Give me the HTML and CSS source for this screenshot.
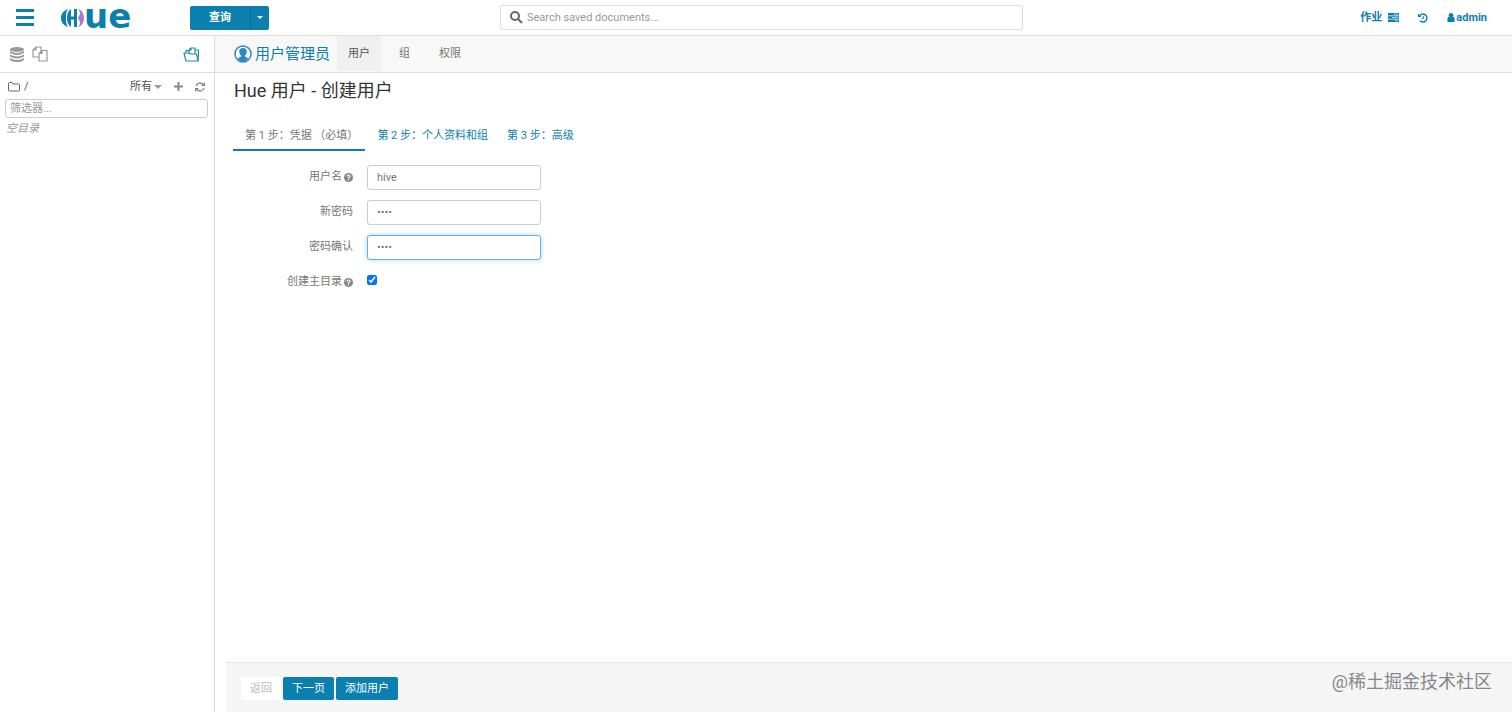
FILE: index.html
```html
<!DOCTYPE html>
<html lang="zh-CN">
<head>
	<meta charset="UTF-8">
	<title>Hue - 用户管理员</title>
	<link rel="stylesheet" href="styles.css">
</head>
<body>
	<!-- 顶部导航 -->
	<header class="top-nav">
		<div class="top-left">
			<button class="hamburger" type="button" aria-label="菜单"><span></span><span></span><span></span></button>
			<a class="logo" href="#">
				<svg width="23" height="20" viewBox="0 0 23 20">
					<path d="M7 1C2 3 0 6 0 10s2 7 7 9C5 16 5 14 5 10s0-6 2-9z" fill="#0b7fad"/>
					<path d="M10 1C7 3 6 6 6 10s1 7 4 9v-7.500h3V19h3V1h-3v7.500h-3z" fill="#0b7fad"/>
					<path d="M17 1c4 1 6 5 6 9s-2 8-6 9c2-2 2-4 2-5l-2-4 2-4c0-1 0-3-2-5z" fill="#a77bca"/>
				</svg>
				<span>ue</span>
			</a>
			<div class="btn-group">
				<button class="btn-primary query" type="button">查询</button>
				<button class="btn-primary toggle" type="button" aria-label="更多"><i class="caret"></i></button>
			</div>
		</div>
		<label class="search">
			<svg width="13" height="13" viewBox="0 0 13 13" fill="none" stroke="#666" stroke-width="2"><circle cx="5" cy="5" r="4"/><path d="M8 8l4 4"/></svg>
			<input type="text" placeholder="Search saved documents..." aria-label="Search saved documents">
		</label>
		<nav class="top-right">
			<a class="jobs" href="#">作业
				<svg width="11" height="9" viewBox="0 0 11 9"><path d="M0 0h11v2.500H0zM0 3.300h11v2.500H0zM0 6.500h11V9H0z" fill="#0b7fad"/><path d="M6 1.200h4M4 4.500h6M7 7.700h3" stroke="#a9d2e3"/></svg>
			</a>
			<a href="#" aria-label="历史">
				<svg width="10" height="10" viewBox="0 0 10 10" fill="none" stroke="#0b7fad"><path d="M1.500 3A4 4 0 1 1 2 7.800" stroke-width="1.400"/><path d="M0 .5V4h3.500z" fill="#0b7fad" stroke="none"/><path d="M5.300 3v2.500H3.500"/></svg>
			</a>
			<a class="user" href="#">
				<svg width="8" height="9" viewBox="0 0 8 10" fill="#0b7fad"><circle cx="4" cy="2.500" r="2.500"/><path d="M0 9V7c0-2 1-3 2-3q2 1.500 4 0c1 0 2 1 2 3v2q0 1-1 1H1Q0 10 0 9z"/></svg>
				admin
			</a>
		</nav>
	</header>

	<div class="page">
		<!-- 左侧面板 -->
		<aside class="sidebar">
			<div class="assist-bar">
				<a href="#" aria-label="数据库">
					<svg width="14" height="15" viewBox="0 0 14 15" fill="#999"><ellipse cx="7" cy="2.500" rx="7" ry="2.500"/><path d="M0 4q7 4 14 0v2q-7 4-14 0zM0 7.500q7 4 14 0v2q-7 4-14 0zM0 11q7 4 14 0v1.500q-1 2.500-7 2.500t-7-2.500z"/></svg>
				</a>
				<a href="#" aria-label="文档">
					<svg width="16" height="16" viewBox="0 0 16 16" fill="#fff" stroke="#999" stroke-width="1.200"><path d="M4 1h5v10H1V4zM4 1v3H1"/><path d="M10 4.500h5V15H7V7.500zM10 4.500v3H7"/></svg>
				</a>
				<a class="folder-open" href="#" aria-label="文件">
					<svg width="17" height="15" viewBox="0 0 17 15" fill="#fff" stroke="#1b8cb8" stroke-width="1.200" stroke-linejoin="round"><path d="M3 6V3.500h3M12 3h3.500v3l-.5 8"/><path d="M6 7V3l2-2h4v6M8 1v2H6"/><path d="M1 6h5l1 1h6.500L15 14H3z"/></svg>
				</a>
			</div>
			<div class="path-bar">
				<a class="path" href="#">
					<svg width="12" height="10" viewBox="0 0 12 10" fill="none" stroke="#666"><path d="M.5 8V1.500q0-1 1-1h2.500l1 1.500h5.500q1 0 1 1V8q0 1-1 1h-9q-1 0-1-1z"/></svg>
					/
				</a>
				<button class="plain" type="button">所有<i class="caret"></i></button>
				<button class="plain" type="button" aria-label="新建">
					<svg width="9" height="9" viewBox="0 0 9 9"><path d="M4.500 0v9M0 4.500h9" stroke="#888" stroke-width="2"/></svg>
				</button>
				<button class="plain" type="button" aria-label="刷新">
					<svg width="10" height="10" viewBox="0 0 10 10" fill="none" stroke="#888" stroke-width="1.300"><path d="M1 4.200A4 4 0 0 1 8 2.500M9 5.800A4 4 0 0 1 2 7.500"/><path d="M10 0v4H6zM0 10V6h4z" fill="#888" stroke="none"/></svg>
				</button>
			</div>
			<input class="filter" type="text" placeholder="筛选器..." aria-label="筛选器">
			<p class="empty">空目录</p>
		</aside>

		<main class="content">
			<nav class="app-nav">
				<a class="app-title" href="#">
					<svg width="18" height="18" viewBox="0 0 18 18"><circle cx="9" cy="9" r="8" fill="#fff" stroke="#2f86c1" stroke-width="1.500"/><path d="M9 3c-2.500 0-3.800 1.500-3.800 3.500S6.500 10 7 10.500v1L3.500 13.500Q6 16.500 9 16.500t5.500-3L11 11.500v-1c.5-.5 1.800-2 1.800-4S11.500 3 9 3z" fill="#2f86c1"/></svg>
					用户管理员
				</a>
				<a class="active" href="#">用户</a>
				<a href="#">组</a>
				<a href="#">权限</a>
			</nav>

			<h1>Hue 用户 - 创建用户</h1>

			<nav class="steps">
				<a class="active" href="#">第 1 步：凭据 （必填）</a>
				<a href="#">第 2 步：个人资料和组</a>
				<a href="#">第 3 步：高级</a>
			</nav>

			<!-- 表单 -->
			<form class="user-form" id="userForm">
				<div class="row">
					<label for="username">用户名
						<svg width="9" height="9" viewBox="0 0 9 9"><circle cx="4.500" cy="4.500" r="4.500" fill="#888"/><path d="M3 3.500q0-1.500 1.500-1.500T6 3.300q0 .8-1.500 1.500v.7M4.500 6.300v1.200" fill="none" stroke="#fff" stroke-width="1.200"/></svg>
					</label>
					<input id="username" type="text" value="hive">
				</div>
				<div class="row">
					<label for="password1">新密码</label>
					<input id="password1" type="password" value="hive">
				</div>
				<div class="row">
					<label for="password2">密码确认</label>
					<input id="password2" class="focused" type="password" value="hive">
				</div>
				<div class="row">
					<label for="home">创建主目录
						<svg width="9" height="9" viewBox="0 0 9 9"><circle cx="4.500" cy="4.500" r="4.500" fill="#888"/><path d="M3 3.500q0-1.500 1.500-1.500T6 3.300q0 .8-1.500 1.500v.7M4.500 6.300v1.200" fill="none" stroke="#fff" stroke-width="1.200"/></svg>
					</label>
					<input id="home" type="checkbox" checked>
				</div>
			</form>

			<footer class="actions">
				<button class="btn-back" type="button" disabled>返回</button>
				<button class="btn-primary" type="button">下一页</button>
				<button class="btn-primary" type="submit" form="userForm">添加用户</button>
				<span class="watermark">@稀土掘金技术社区</span>
			</footer>
		</main>
	</div>
</body>
</html>
```
FILE: styles.css
```css
* {
	box-sizing: border-box;
}

body {
	margin: 0;
	min-height: 100vh;
	display: flex;
	flex-direction: column;
	background-color: #FFF;
	color: #777;
	font-family: Roboto, "Noto Sans CJK SC", sans-serif;
	font-size: 11px;
	line-height: 16px;
}

a {
	color: #0B7FAD;
	text-decoration: none;
}

button,
input {
	font-family: inherit;
	font-size: inherit;
	line-height: 16px;
}

button {
	padding: 0;
	border: none;
	background: none;
	cursor: pointer;
}

svg {
	flex: none;
}

/* 顶部导航 */
.top-nav {
	display: grid;
	grid-template-columns: 484px 1fr 464px;
	align-items: center;
	height: 36px;
	padding: 0 25px 0 16px;
	border-bottom: 1px solid #DDD;
}

.top-left {
	display: flex;
	align-items: center;
}

.hamburger {
	display: flex;
	flex-direction: column;
	gap: 4px;
	width: 18px;
	margin-right: 27px;
}

.hamburger span {
	height: 3px;
	background-color: #0B7FAD;
}

.logo {
	display: flex;
	align-items: center;
	width: 129px;
	height: 35px;
}

.logo span {
	padding-bottom: 4px;
	font-family: "DejaVu Sans", sans-serif;
	font-size: 34px;
	font-weight: bold;
	line-height: 30px;
}

.btn-group {
	display: flex;
}

.btn-primary {
	height: 23px;
	padding: 0 9px;
	border-radius: 2px;
	background-color: #0B7FAD;
	color: #FFF;
}

.query {
	width: 61px;
	height: 24px;
	border-right: 1px solid #086A93;
	border-radius: 2px 0 0 2px;
	font-weight: bold;
}

.toggle {
	width: 18px;
	height: 24px;
	padding: 0;
	border-radius: 0 2px 2px 0;
}

.caret {
	display: inline-block;
	border: 3px solid transparent;
	border-top-color: currentColor;
	border-bottom: none;
	vertical-align: middle;
}

.search {
	display: flex;
	align-items: center;
	gap: 4px;
	height: 25px;
	padding: 0 9px;
	border: 1px solid #DDD;
	border-radius: 2px;
}

.search input {
	flex: 1;
	padding: 0;
	border: none;
	outline: none;
}

::placeholder {
	color: #999;
}

.top-right {
	display: flex;
	justify-content: flex-end;
	align-items: center;
	gap: 19px;
	font-weight: bold;
}

.top-right a {
	display: flex;
	align-items: center;
}

.top-right .jobs {
	gap: 6px;
}

.top-right .user {
	gap: 1px;
}

.page {
	flex: 1;
	display: flex;
}

/* 左侧面板 */
.sidebar {
	flex: none;
	width: 215px;
	border-right: 1px solid #DDD;
}

.assist-bar {
	display: flex;
	align-items: center;
	gap: 8px;
	height: 37px;
	padding: 0 14px 0 10px;
	border-bottom: 1px solid #DDD;
}

.assist-bar a {
	display: flex;
}

.assist-bar .folder-open {
	margin-left: auto;
}

.path-bar {
	display: flex;
	align-items: center;
	gap: 12px;
	height: 26px;
	padding: 1px 9px 0 8px;
}

.path {
	display: flex;
	align-items: center;
	gap: 4px;
	margin-right: auto;
	color: #555;
}

.plain {
	display: flex;
	align-items: center;
	gap: 2px;
	color: #555;
}

.plain .caret {
	border-width: 4px 4px 0;
	border-top-color: #999;
}

.filter {
	display: block;
	width: 203px;
	height: 19px;
	margin-left: 5px;
	padding: 0 4px;
	border: 1px solid #CCC;
	border-radius: 3px;
}

.empty {
	margin: 3px 6px;
	color: #999;
	font-style: italic;
}

/* 主内容 */
.content {
	flex: 1;
	display: flex;
	flex-direction: column;
}

.app-nav {
	display: flex;
	gap: 7px;
	height: 37px;
	padding-left: 19px;
	border-bottom: 1px solid #DDD;
	background-color: #F8F8F8;
}

.app-nav a {
	display: flex;
	align-items: center;
	height: 35px;
	padding: 0 11px;
	color: #777;
}

.app-nav .app-title {
	gap: 3px;
	padding: 0;
	color: #0B7FAD;
	font-size: 15px;
}

.app-nav .active {
	background-color: #F0F0F0;
	color: #555;
}

h1 {
	margin: 6px 19px 0;
	color: #333;
	font-size: 18px;
	font-weight: normal;
	line-height: 24px;
}

.steps {
	display: flex;
	margin: 16px 18px 0;
}

.steps a {
	height: 32px;
	padding: 9px 7px 0 12px;
}

.steps .active {
	border-bottom: 2px solid #0B7FAD;
	color: #777;
}

.user-form {
	display: flex;
	flex-direction: column;
	gap: 10px;
	margin: 14px 18px 0;
}

.row {
	display: flex;
	gap: 14px;
	height: 25px;
}

.row label {
	display: flex;
	justify-content: flex-end;
	align-items: center;
	gap: 2px;
	width: 120px;
	height: 24px;
}

.row input {
	width: 174px;
	height: 25px;
	margin: 0;
	padding: 0 9px;
	border: 1px solid #CCC;
	border-radius: 3px;
	outline: none;
	color: #777;
}

.row .focused {
	border-color: #66AFE9;
	box-shadow: 0 0 5px #A8D5F7;
}

.row input[type="checkbox"] {
	width: 10px;
	height: 10px;
	margin-top: 5px;
}

.actions {
	display: flex;
	align-items: center;
	gap: 2px;
	height: 50px;
	margin: auto 0 0 11px;
	padding: 2px 20px 0 15px;
	border-top: 1px solid #E5E5E5;
	background-color: #F5F5F5;
}

.btn-back {
	height: 23px;
	padding: 0 9px;
	border-radius: 2px;
	background-color: #FFF;
	color: #BBB;
}

.watermark {
	margin-left: auto;
	padding-bottom: 13px;
	color: #888;
	font-size: 18px;
}
```
